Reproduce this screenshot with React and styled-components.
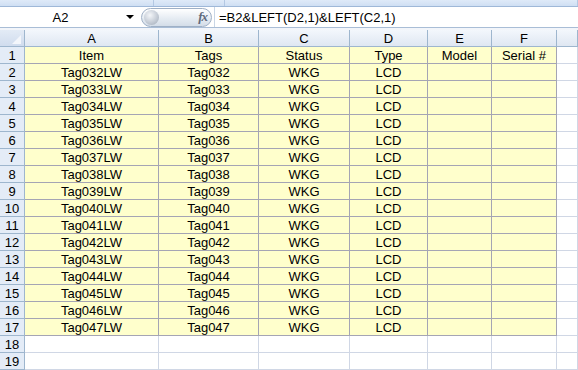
import React from 'react'
import styled, { createGlobalStyle } from 'styled-components'

const GlobalStyle = createGlobalStyle`
  html, body {
    margin: 0;
    padding: 0;
    background: #ffffff;
    overflow: hidden;
  }
  body {
    font-family: "Liberation Sans", Arial, sans-serif;
  }
`

const COLS = ['A', 'B', 'C', 'D', 'E', 'F', '']
const WIDTHS = '25px 134px 100px 91px 78px 64px 65px 1fr'

const rows = []
for (let n = 32; n <= 47; n++) {
  const num = String(n).padStart(3, '0')
  rows.push([`Tag${num}LW`, `Tag${num}`, 'WKG', 'LCD', '', ''])
}

const Window = styled.div`
  width: 578px;
  height: 370px;
  overflow: hidden;
  display: flex;
  flex-direction: column;
  background: #ffffff;
`

const RibbonEdge = styled.div`
  height: 6px;
  display: flex;
  background: #d6e4f6;
  border-bottom: 1px solid #9fb8d8;
`

const RibbonGroup = styled.div`
  width: ${p => p.$w || 'auto'};
  flex: ${p => (p.$w ? 'none' : 1)};
  border-right: 1px solid #b3c8e3;
  background: linear-gradient(#dfeaf8, #cfdff3);
`

const FormulaBar = styled.div`
  height: 20px;
  display: flex;
  align-items: center;
  background: #ffffff;
  border-bottom: 1px solid #a9bdd6;
`

const NameBox = styled.div`
  width: 141px;
  height: 100%;
  position: relative;
  display: flex;
  align-items: center;
  justify-content: center;
  font-size: 13px;
  color: #000;
  padding-right: 20px;
  box-sizing: border-box;
`

const DropArrow = styled.span`
  position: absolute;
  right: 7px;
  top: 8px;
  width: 0;
  height: 0;
  border-left: 4px solid transparent;
  border-right: 4px solid transparent;
  border-top: 4px solid #000;
`

const Pill = styled.div`
  width: 71px;
  height: 19px;
  box-sizing: border-box;
  border: 1px solid #9fb0c6;
  border-radius: 10px;
  background: linear-gradient(#ffffff, #e6ecf3 55%, #d4dde8);
  display: flex;
  align-items: center;
  justify-content: space-between;
  padding: 0 4px 0 2px;
`

const Knob = styled.span`
  width: 15px;
  height: 15px;
  border-radius: 50%;
  background: radial-gradient(circle at 40% 35%, #f4f6f9 0%, #c5ccd6 55%, #9ea8b5 100%);
`

const Fx = styled.span`
  font-family: "Liberation Serif", "Times New Roman", serif;
  font-style: italic;
  font-weight: bold;
  font-size: 13px;
  color: #5f6a7c;
  letter-spacing: -1px;
`

const Divider = styled.span`
  width: 1px;
  height: 100%;
  margin: 0 4px 0 2px;
  background: #c9d6e6;
`

const FormulaText = styled.div`
  font-size: 13px;
  color: #000;
  white-space: nowrap;
`

const HeaderGap = styled.div`
  height: 2px;
  background: #f2f5fa;
`

const Sheet = styled.div`
  display: grid;
  grid-template-columns: ${WIDTHS};
  grid-auto-rows: 17px;
  font-size: 13px;
`

const Corner = styled.div`
  position: relative;
  box-sizing: border-box;
  border-right: 1px solid #9eb6ce;
  border-bottom: 1px solid #9eb6ce;
  background: linear-gradient(#e3ebf6, #d0dcee);
`

const CornerTriangle = styled.span`
  position: absolute;
  right: 3px;
  bottom: 2px;
  width: 0;
  height: 0;
  border-left: 9px solid transparent;
  border-bottom: 9px solid #f3f6fb;
`

const ColHeader = styled.div`
  box-sizing: border-box;
  border-right: 1px solid #9eb6ce;
  border-bottom: 1px solid #9eb6ce;
  background: linear-gradient(#f3f7fc, #dfe7f2);
  display: flex;
  align-items: center;
  justify-content: center;
  color: #000;
`

const RowHeader = styled.div`
  box-sizing: border-box;
  border-right: 1px solid #9eb6ce;
  border-bottom: 1px solid #9eb6ce;
  background: #e4ecf7;
  display: flex;
  align-items: center;
  justify-content: center;
  color: #000;
`

const Cell = styled.div`
  box-sizing: border-box;
  background: ${p => (p.$filled ? '#ffffcc' : '#ffffff')};
  border-right: 1px solid ${p => (p.$filled ? '#a5a5b4' : '#d0d7e5')};
  border-bottom: 1px solid ${p => (p.$filled ? '#a5a5b4' : '#d0d7e5')};
  display: flex;
  align-items: center;
  justify-content: center;
  white-space: nowrap;
  overflow: hidden;
  color: #000;
  line-height: 1;
`

export default function App() {
  const header = ['Item', 'Tags', 'Status', 'Type', 'Model', 'Serial #']
  const data = [header, ...rows]

  return (
    <Window>
      <GlobalStyle />
      <RibbonEdge>
        <RibbonGroup $w="153px" />
        <RibbonGroup $w="70px" />
        <RibbonGroup />
      </RibbonEdge>
      <FormulaBar>
        <NameBox>
          A2
          <DropArrow />
        </NameBox>
        <Pill>
          <Knob />
          <Fx>fx</Fx>
        </Pill>
        <Divider />
        <FormulaText>=B2&amp;LEFT(D2,1)&amp;LEFT(C2,1)</FormulaText>
      </FormulaBar>
      <HeaderGap />
      <Sheet>
        <Corner>
          <CornerTriangle />
        </Corner>
        {COLS.map((c, i) => (
          <ColHeader key={i}>{c}</ColHeader>
        ))}
        {Array.from({ length: 19 }, (_, r) => {
          const values = data[r]
          return (
            <React.Fragment key={r}>
              <RowHeader>{r + 1}</RowHeader>
              {COLS.map((_, c) => {
                const filled = !!values && c < 6
                return (
                  <Cell key={c} $filled={filled}>
                    {values && c < 6 ? values[c] : ''}
                  </Cell>
                )
              })}
            </React.Fragment>
          )
        })}
      </Sheet>
    </Window>
  )
}
